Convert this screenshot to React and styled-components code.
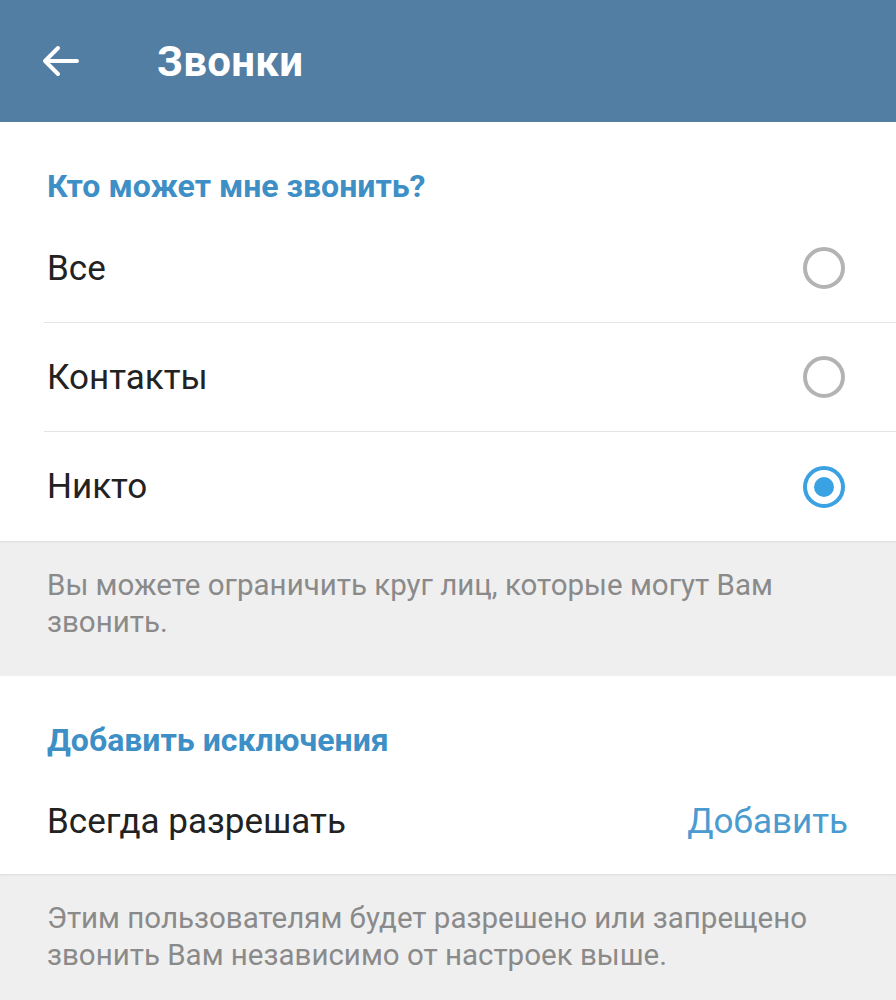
import React from 'react'
import styled, { createGlobalStyle } from 'styled-components'

const GlobalStyle = createGlobalStyle`
    body {
        margin: 0;
        background: #efefef;
        font-family: Roboto, "Noto Sans", "Liberation Sans", sans-serif;
    }
`

const Page = styled.div`
    width: 896px;
    min-height: 1000px;
    background: #efefef;
`

const TopBar = styled.header`
    height: 122px;
    background: #527ea3;
    display: flex;
    align-items: center;
    padding-left: 40px;
    box-sizing: border-box;
`

const BackButton = styled.button`
    width: 40px;
    height: 40px;
    padding: 0;
    border: none;
    background: none;
    display: flex;
    align-items: center;
    justify-content: center;
    margin-right: 77px;
`

const Title = styled.h1`
    margin: 0;
    color: #fff;
    font-size: 42px;
    font-weight: 700;
    letter-spacing: 0.3px;
`

const Section = styled.section`
    background: #fff;
`

const SectionTitle = styled.div`
    padding: 44px 47px 8px;
    line-height: 40px;
    font-size: 32px;
    font-weight: 700;
    color: #3d8fc6;
`

const Row = styled.div`
    height: ${({ last }) => (last ? '106px' : '109px')};
    box-sizing: border-box;
    margin-left: 44px;
    padding: 0 48px 0 3px;
    display: flex;
    align-items: center;
    justify-content: space-between;
    border-bottom: ${({ divider }) => (divider ? '1px solid #e4e4e4' : 'none')};
    font-size: 35px;
    color: #222;
`

const RowAction = styled.span`
    color: #4a9bd0;
    font-size: 35px;
`

const Radio = styled.span`
    width: 42px;
    height: 42px;
    box-sizing: border-box;
    border-radius: 50%;
    border: 4px solid ${({ checked }) => (checked ? '#3aa1e3' : '#b3b3b3')};
    display: flex;
    align-items: center;
    justify-content: center;
    margin-right: 3px;

    &::after {
        content: '';
        width: 20px;
        height: 20px;
        border-radius: 50%;
        background: #3aa1e3;
        display: ${({ checked }) => (checked ? 'block' : 'none')};
    }
`

const Hint = styled.p`
    margin: 0;
    padding: 26px 60px 35px 47px;
    line-height: 37px;
    font-size: 29.5px;
    color: #8a8a8a;
    background: #efefef;
    box-shadow: inset 0 2px 2px -1px rgba(0, 0, 0, 0.08);
`

const options = ['Все', 'Контакты', 'Никто']

function ArrowBack() {
    return (
        <svg width="40" height="40" viewBox="0 0 40 40" fill="none">
            <path d="M5 20H37M18 7L5 20L18 33" stroke="#fff" strokeWidth="4" strokeLinecap="round" strokeLinejoin="round" />
        </svg>
    )
}

export default function App() {
    const selected = 'Никто'

    return (
        <Page>
            <GlobalStyle />
            <TopBar>
                <BackButton><ArrowBack /></BackButton>
                <Title>Звонки</Title>
            </TopBar>

            <Section>
                <SectionTitle>Кто может мне звонить?</SectionTitle>
                {options.map((o, i) => (
                    <Row key={o} divider={i < options.length - 1}>
                        {o}
                        <Radio checked={o === selected} />
                    </Row>
                ))}
            </Section>
            <Hint>Вы можете ограничить круг лиц, которые могут Вам звонить.</Hint>

            <Section>
                <SectionTitle>Добавить исключения</SectionTitle>
                <Row last>
                    Всегда разрешать
                    <RowAction>Добавить</RowAction>
                </Row>
            </Section>
            <Hint>Этим пользователям будет разрешено или запрещено звонить Вам независимо от настроек выше.</Hint>
        </Page>
    )
}
